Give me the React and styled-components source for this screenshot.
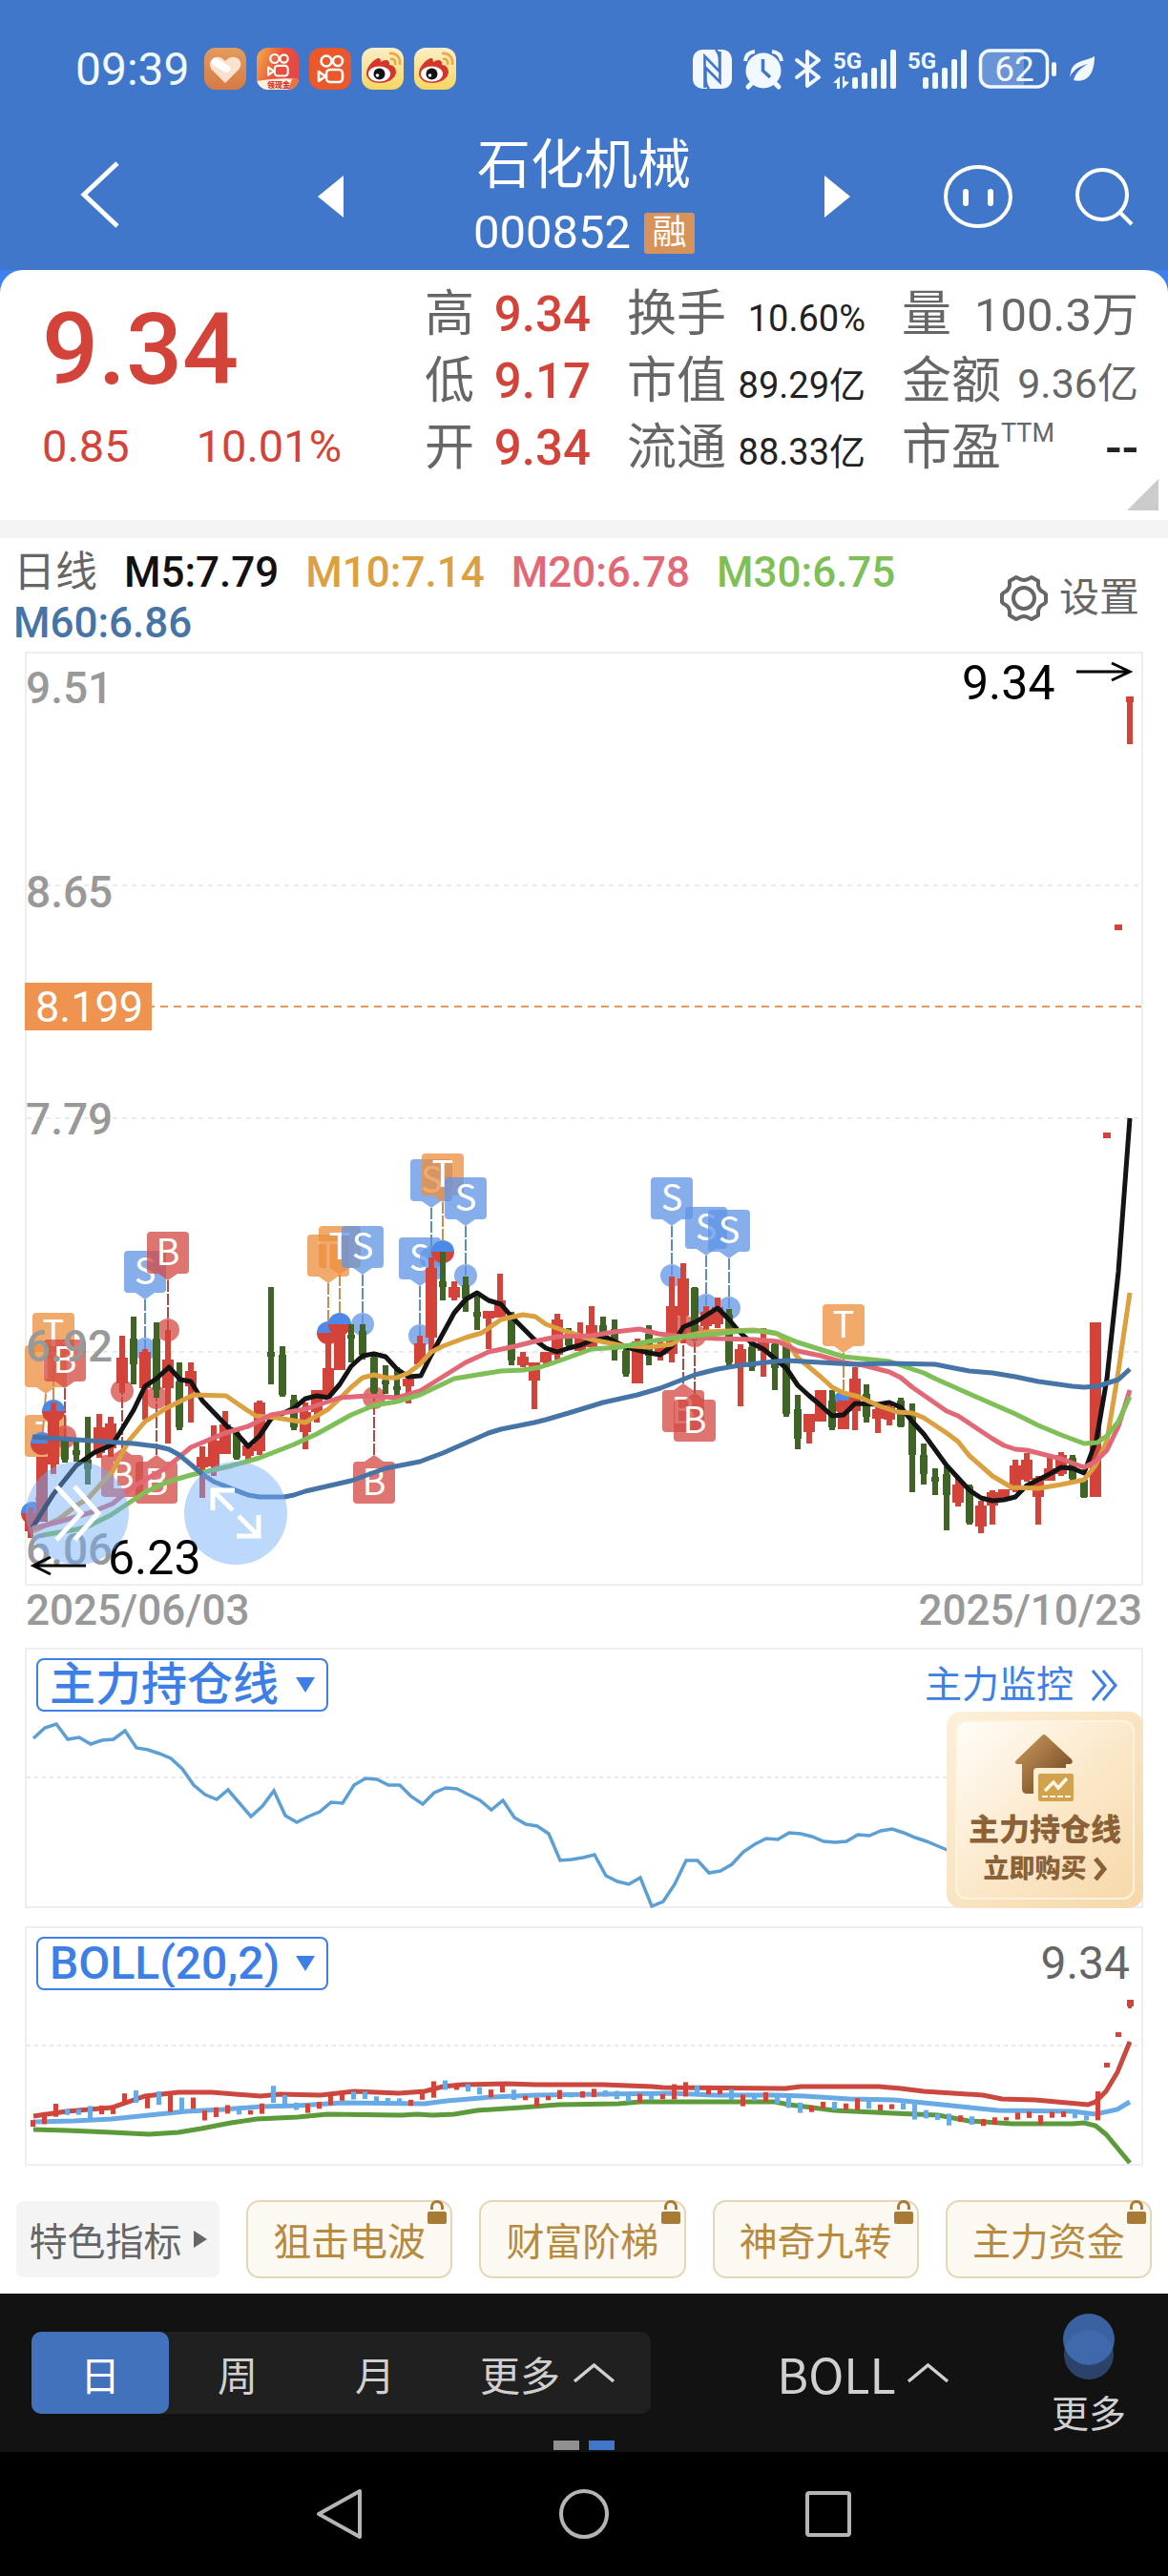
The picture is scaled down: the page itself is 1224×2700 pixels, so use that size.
import styled, { createGlobalStyle } from 'styled-components';

const FONT = 'Roboto, "Noto Sans CJK SC", sans-serif';
const BLUE = '#4077cb';
const LINK = '#3d7fe6';
const RED = '#d4433a';
const GREEN = '#3f6425';

const GlobalStyle = createGlobalStyle`
  * {
    box-sizing: border-box;
  }
  body {
    margin: 0;
    background: #000;
    font-family: ${FONT};
  }
  button,
  select {
    font-family: inherit;
    border: 0;
    padding: 0;
    background: none;
    color: inherit;
    cursor: pointer;
  }
  svg {
    display: block;
    flex: none;
    overflow: visible;
  }
`;

const Page = styled.main`
  background: #fff;
  color: #666;
`;

/* ---------- header ---------- */

const Header = styled.header`
  background: ${BLUE};
  color: #fff;
`;

const StatusBar = styled.div`
  display: flex;
  align-items: center;
  justify-content: space-between;
  height: 140px;
  padding: 4px 76px 0 79px;
  color: #f2f8ff;
`;

const StatusGroup = styled.div`
  display: flex;
  align-items: center;
  gap: ${({ $gap }) => $gap}px;
`;

const Clock = styled.time`
  font-size: 48px;
  margin-right: 4px;
`;

const TitleBar = styled.div`
  display: grid;
  grid-template-columns: 1fr auto 1fr;
  align-items: center;
  height: 143px;
  padding: 0 37px 17px;
`;

const TitleSide = styled.div`
  padding-left: 47px;
`;

const TitleActions = styled.div`
  display: flex;
  align-items: center;
  justify-content: flex-end;
  gap: 66px;
`;

const TitleCenter = styled.div`
  display: flex;
  align-items: center;
  justify-content: space-between;
  width: 558px;
`;

const StockTitle = styled.div`
  display: flex;
  flex-direction: column;
  align-items: center;
  gap: 10px;
`;

const StockName = styled.h1`
  margin: 0;
  font-size: 56px;
  font-weight: 400;
  line-height: 66px;
`;

const StockCode = styled.div`
  display: flex;
  align-items: center;
  gap: 14px;
  font-size: 49px;
  line-height: 56px;
`;

const MarginTag = styled.span`
  width: 53px;
  height: 43px;
  border-radius: 3px;
  background: #d8935b;
  font-size: 36px;
  line-height: 42px;
  text-align: center;
`;

/* ---------- quote ---------- */

const QuoteBack = styled.div`
  background: #3d82f0;
`;

const Quote = styled.section`
  position: relative;
  display: flex;
  padding: 12px 31px 40px 44px;
  border-radius: 24px 24px 0 0;
  background: #fff;
`;

const PriceBox = styled.div`
  flex: 1;
  color: ${RED};
`;

const Price = styled.div`
  padding-top: 9px;
  font-size: 104px;
  font-weight: 500;
  line-height: 126px;
`;

const Change = styled.div`
  display: flex;
  gap: 70px;
  padding-top: 8px;
  font-size: 47px;
  line-height: 60px;
`;

const Facts = styled.dl`
  display: grid;
  grid-template-columns: 174px 250px 248px;
  grid-auto-rows: 70px;
  column-gap: 38px;
  margin: 0;
`;

const Fact = styled.div`
  display: flex;
  align-items: baseline;
  justify-content: space-between;
  white-space: nowrap;
  line-height: 70px;
`;

const FactName = styled.dt`
  font-size: 52px;

  & sup {
    font-size: 27px;
    line-height: 1;
    vertical-align: 24px;
  }
`;

const FactValue = styled.dd`
  margin: 0;
  font-size: ${({ $size }) => $size}px;
  font-weight: ${({ $bold }) => ($bold ? 500 : 400)};
  color: ${({ $color }) => $color};
`;

const CornerButton = styled.button`
  position: absolute;
  right: 10px;
  bottom: 10px;
  width: 33px;
  height: 33px;
  background: #ccc;
  clip-path: polygon(100% 0, 100% 100%, 0 100%);
`;

/* ---------- charts ---------- */

const LegendBar = styled.div`
  display: flex;
  align-items: center;
  justify-content: space-between;
  border-top: 19px solid #f4f4f4;
  padding: 10px 30px 3px 14px;
`;

const Legend = styled.div`
  display: flex;
  flex-wrap: wrap;
  column-gap: 28px;
  max-width: 960px;
  font-size: 44px;
  line-height: 53px;
`;

const LegendItem = styled.span`
  color: ${({ $color }) => $color};
  font-weight: ${({ $bold }) => ($bold ? 500 : 400)};
`;

const SettingsButton = styled.button`
  display: flex;
  align-items: center;
  gap: 12px;
  font-size: 42px;
  line-height: 52px;
  color: #666;
`;

const Panel = styled.section`
  position: relative;
  margin: 0 26px;
  border: 2px solid #eee;

  & > svg {
    width: 100%;
    height: auto;
  }
`;

const FloatButton = styled.button`
  position: absolute;
  left: ${({ $left }) => $left}px;
  bottom: 20px;
  display: flex;
  align-items: center;
  justify-content: center;
  width: 108px;
  height: 108px;
  border-radius: 50%;
  background: rgba(112, 172, 246, 0.47);
`;

const Dates = styled.div`
  display: flex;
  justify-content: space-between;
  height: 65px;
  padding: 0 27px;
  font-size: 44px;
  font-weight: 500;
  line-height: 53px;
  color: #999;
`;

const PanelHead = styled.div`
  display: flex;
  align-items: center;
  justify-content: space-between;
  height: 65px;
  padding: 9px 12px 0 10px;
`;

const SelectWrap = styled.label`
  position: relative;
  display: flex;
  align-items: center;
  color: ${LINK};

  & svg {
    position: absolute;
    right: 14px;
    pointer-events: none;
  }
`;

const Select = styled.select`
  appearance: none;
  width: 306px;
  height: 56px;
  padding: 0 40px 0 12px;
  border: 2px solid ${LINK};
  border-radius: 8px;
  font-size: 48px;
  line-height: 50px;
  font-weight: 500;
`;

const MonitorLink = styled.a`
  display: flex;
  align-items: center;
  gap: 18px;
  padding-right: 12px;
  color: ${LINK};
  font-size: 39px;
  line-height: 50px;
  text-decoration: none;
`;

const LastValue = styled.span`
  font-size: 48px;
  line-height: 52px;
`;

const BuyCard = styled.a`
  position: absolute;
  right: -2px;
  bottom: -2px;
  width: 206px;
  height: 206px;
  padding: 9px;
  border-radius: 15px;
  background: linear-gradient(135deg, #fcf0da, #f6d8a9);
  color: #8b6238;
  text-decoration: none;
`;

const BuyInner = styled.span`
  display: flex;
  flex-direction: column;
  align-items: center;
  height: 100%;
  padding-top: 13px;
  border: 2px solid #fff3dd;
  border-radius: 12px;
  background: linear-gradient(135deg, #fffdf8, #fbe7c7 55%, #f7d9ab);
`;

const BuyTitle = styled.strong`
  margin-top: 8px;
  font-size: 32px;
  font-weight: 900;
  line-height: 44px;
  white-space: nowrap;
`;

const BuyAction = styled.strong`
  display: flex;
  align-items: center;
  gap: 7px;
  font-size: 27px;
  font-weight: 900;
  line-height: 38px;
`;

const Gap = styled.div`
  height: 19px;
`;

/* ---------- indicator buttons ---------- */

const Indicators = styled.div`
  display: grid;
  grid-template-columns: 213px repeat(4, 1fr);
  gap: 28px;
  padding: 36px 17px 16px;
`;

const FeatureButton = styled.button`
  display: flex;
  align-items: center;
  justify-content: center;
  gap: 12px;
  height: 80px;
  align-self: center;
  border-radius: 8px;
  background: #f4f4f4;
  color: #666;
  font-size: 40px;
`;

const LockedButton = styled.button`
  position: relative;
  height: 82px;
  border: 2px solid #e5d6ba;
  border-radius: 14px;
  background: #fcf8f2;
  color: #b68b40;
  font-size: 40px;

  & svg {
    position: absolute;
    top: -2px;
    right: 4px;
  }
`;

/* ---------- bottom ---------- */

const Toolbar = styled.div`
  position: relative;
  display: flex;
  align-items: center;
  justify-content: space-between;
  height: 166px;
  padding: 0 44px 0 33px;
  background: #121212;
  color: #d0d0d0;
`;

const Periods = styled.div`
  display: flex;
  width: 649px;
  height: 86px;
  border-radius: 10px;
  background: #202020;
`;

const PeriodButton = styled.button`
  flex: ${({ $wide }) => ($wide ? '1' : '0 0 144px')};
  display: flex;
  align-items: center;
  justify-content: center;
  gap: 14px;
  border-radius: 10px;
  background: ${({ $active }) => ($active ? '#4272bb' : 'transparent')};
  color: ${({ $active }) => ($active ? '#fff' : 'inherit')};
  font-size: 42px;
`;

const IndexButton = styled.button`
  display: flex;
  align-items: center;
  gap: 12px;
  margin-left: 24px;
  font-family: 'Noto Sans CJK SC', sans-serif;
  font-size: 50px;
  line-height: 60px;
`;

const MoreButton = styled.button`
  display: flex;
  flex-direction: column;
  align-items: center;
  gap: 6px;
  padding-top: 12px;
  font-size: 39px;
  line-height: 60px;
`;

const Pager = styled.div`
  position: absolute;
  left: 0;
  right: 0;
  bottom: 2px;
  display: flex;
  justify-content: center;
  gap: 10px;
`;

const PagerDot = styled.span`
  width: 27px;
  height: 10px;
  background: ${({ $active }) => ($active ? BLUE : '#909090')};
`;

const NavBar = styled.nav`
  display: flex;
  justify-content: center;
  gap: 200px;
  height: 130px;
  background: #000;
`;

/* ---------- data ---------- */

const FACTS = [
  { name: '高', value: '9.34', size: 51, bold: true, color: RED },
  { name: '换手', value: '10.60%', size: 38, color: '#222' },
  { name: '量', value: '100.3万', size: 49, color: '#666' },
  { name: '低', value: '9.17', size: 51, bold: true, color: RED },
  { name: '市值', value: '89.29亿', size: 38, color: '#222' },
  { name: '金额', value: '9.36亿', size: 43, color: '#666' },
  { name: '开', value: '9.34', size: 51, bold: true, color: RED },
  { name: '流通', value: '88.33亿', size: 38, color: '#222' },
  { name: '市盈', sup: 'TTM', value: '--', size: 51, bold: true, color: '#222' },
];

const LEGEND = [
  { text: 'M5:7.79', color: '#111' },
  { text: 'M10:7.14', color: '#dca03f' },
  { text: 'M20:6.78', color: '#e26876' },
  { text: 'M30:6.75', color: '#7fbf57' },
  { text: 'M60:6.86', color: '#4674a6' },
];

// one candle per trading day: [up, high, low, body top, body bottom], y measured from BASE
const BASE = 1180;
const CANDLES = [
  [1, 400, 432, 406, 425], [1, 347, 415, 347, 415], [1, 290, 365, 305, 355], [0, 327, 353, 330, 350],
  [0, 327, 352, 340, 345], [0, 305, 376, 350, 360], [1, 302, 348, 316, 343], [1, 305, 347, 312, 338],
  [1, 220, 280, 243, 270], [0, 200, 271, 223, 250], [1, 234, 308, 237, 275], [0, 206, 285, 223, 277],
  [1, 214, 333, 245, 275], [0, 248, 319, 268, 316], [1, 248, 311, 257, 273], [1, 336, 390, 347, 358],
  [1, 314, 367, 330, 357], [1, 299, 344, 313, 344], [0, 320, 350, 322, 348], [1, 334, 350, 335, 346],
  [1, 288, 345, 290, 341], [0, 169, 271, 237, 242], [0, 231, 284, 240, 282], [0, 282, 319, 287, 316],
  [1, 290, 339, 300, 321], [1, 277, 311, 277, 300], [1, 225, 287, 254, 282], [1, 210, 256, 210, 256],
  [0, 208, 248, 219, 223], [0, 208, 245, 215, 240], [0, 240, 281, 243, 279], [0, 251, 281, 267, 271],
  [0, 253, 290, 273, 277], [1, 263, 291, 265, 273], [1, 220, 250, 228, 250], [1, 138, 236, 149, 222],
  [0, 132, 183, 163, 169], [1, 163, 183, 169, 180], [0, 158, 195, 167, 181], [0, 178, 214, 195, 200],
  [1, 194, 234, 194, 202], [1, 155, 201, 183, 201], [0, 195, 251, 198, 246], [1, 237, 253, 242, 251],
  [1, 248, 297, 248, 267], [1, 237, 253, 237, 248], [1, 197, 245, 203, 240], [0, 212, 234, 216, 230],
  [1, 206, 236, 222, 236], [1, 189, 232, 209, 232], [0, 200, 228, 209, 225], [0, 203, 246, 213, 235],
  [0, 230, 263, 236, 260], [1, 223, 270, 226, 270], [0, 209, 251, 218, 241], [1, 225, 246, 232, 240],
  [1, 158, 248, 189, 239], [1, 144, 228, 160, 199], [0, 169, 225, 170, 222], [1, 189, 214, 195, 210],
  [1, 180, 212, 190, 208], [0, 192, 251, 198, 248], [1, 229, 294, 234, 250], [0, 225, 257, 232, 253],
  [1, 212, 263, 225, 236], [0, 226, 277, 229, 254], [0, 225, 305, 230, 302], [0, 282, 339, 297, 328],
  [1, 302, 333, 302, 321], [1, 277, 310, 277, 310], [0, 277, 319, 288, 316], [1, 288, 318, 288, 318],
  [1, 253, 319, 265, 299], [0, 271, 311, 281, 305], [1, 295, 322, 297, 307], [1, 293, 314, 295, 308],
  [0, 285, 316, 288, 315], [0, 291, 384, 300, 345], [0, 333, 376, 345, 365], [0, 359, 387, 368, 373],
  [0, 357, 424, 365, 387], [1, 369, 399, 376, 395], [0, 376, 418, 378, 416], [1, 393, 427, 398, 420],
  [1, 382, 418, 384, 398], [1, 381, 390, 381, 390], [1, 350, 384, 356, 382], [1, 343, 373, 350, 371],
  [1, 367, 418, 369, 389], [1, 345, 372, 359, 372], [1, 342, 367, 345, 365], [0, 345, 375, 348, 370],
  [0, 369, 390, 371, 389], [1, 206, 389, 206, 389],
];

const LINES = [
  {
    color: '#141414',
    points:
      '34,421 56,386 80,356 98,343 118,334 140,298 152,273 164,265 177,253 189,266 200,268 212,288 240,317 246,320 260,336 272,325 284,307 308,296 320,286 332,283 344,285 356,271 368,252 380,241 392,239 404,242 416,255 428,263 441,262 452,240 476,196 488,182 500,175 512,183 525,187 536,200 560,224 572,233 584,237 596,233 608,230 620,225 636,222 656,232 680,238 692,240 704,231 716,211 730,205 752,191 764,203 774,215 788,228 800,234 824,254 836,272 848,283 860,293 872,304 884,303 896,291 920,292 932,290 944,295 956,310 968,323 992,356 1016,382 1028,390 1040,393 1052,392 1064,389 1076,377 1100,365 1112,358 1124,359 1136,364 1149,329 1160,265 1172,153 1184,-8',
  },
  {
    color: '#dca03f',
    points:
      '35,425 62,412 80,398 92,391 118,362 135,330 152,310 176,295 203,282 237,283 250,292 268,304 290,306 320,311 344,297 356,286 368,274 380,264 392,261 404,264 416,264 428,259 440,250 452,237 464,231 488,222 505,217 525,203 548,198 561,200 572,208 592,215 620,224 650,230 680,232 704,229 716,221 740,216 764,215 790,214 815,218 826,228 836,243 860,263 872,274 884,280 900,284 920,293 940,300 956,301 968,306 992,322 1004,331 1016,346 1040,367 1060,379 1088,380 1112,376 1136,371 1148,356 1160,330 1172,257 1184,175',
  },
  {
    color: '#e26876',
    points:
      '34,422 62,415 96,405 118,396 140,378 175,358 200,337 236,322 260,315 284,303 320,297 356,285 385,283 416,285 440,278 464,263 488,248 512,237 540,231 560,226 584,221 620,220 644,216 670,213 690,218 716,221 752,223 790,224 815,226 836,236 860,241 884,248 905,251 932,258 944,264 956,274 992,299 1004,304 1028,320 1040,328 1052,335 1064,339 1076,340 1088,343 1112,349 1136,358 1148,352 1160,340 1172,315 1184,277',
  },
  {
    color: '#7fbf57',
    points:
      '45,429 80,423 92,420 116,408 152,384 176,373 200,366 240,357 272,348 308,334 332,323 368,303 392,293 416,289 440,282 476,265 500,261 525,257 548,256 566,253 584,247 620,234 650,232 680,226 716,221 752,218 776,215 800,215 812,217 836,227 884,242 932,247 956,255 968,259 980,265 1016,281 1064,302 1088,314 1112,324 1136,333 1150,332 1160,325 1172,310 1184,284',
  },
  {
    color: '#4674a6',
    points:
      '34,326 80,329 140,333 164,336 177,339 188,345 212,365 224,373 260,387 272,389 298,389 308,387 320,383 368,372 404,359 440,352 464,343 512,322 525,318 560,311 572,308 596,301 632,290 668,282 692,275 728,261 752,255 776,251 812,247 824,246 860,248 896,250 932,249 980,250 1000,254 1016,257 1040,259 1064,263 1088,268 1124,273 1136,274 1150,273 1172,266 1184,255',
  },
];

// trade flags: [letter, x of the day, box x, box top, dot y]
const FLAGS = [
  ['T', 34, 48, 303, 406],
  ['T', 44, 48, 230, 333],
  ['T', 56, 56, 196, 299],
  ['B', 68, 68, 224, 326],
  ['S', 152, 152, 131, 234],
  ['B', 176, 176, 111, 214],
  ['B', 164, 164, 352, 285],
  ['B', 128, 128, 345, 278],
  ['T', 344, 344, 114, 217],
  ['T', 356, 356, 105, 208],
  ['S', 380, 380, 105, 208],
  ['B', 392, 392, 352, 285],
  ['S', 440, 440, 117, 220],
  ['S', 452, 452, 35, 138],
  ['T', 464, 464, 29, 132],
  ['S', 488, 488, 54, 157],
  ['S', 704, 704, 54, 157],
  ['S', 740, 740, 85, 188],
  ['S', 764, 764, 88, 191],
  ['B', 716, 716, 277, 210],
  ['B', 728, 728, 287, 220],
  ['T', 884, 884, 187, 290],
];

const FLAG_COLORS = {
  T: { fill: '#ed8f3f', line: '#d28a4e' },
  B: { fill: '#d44a44', line: '#b04a45' },
  S: { fill: '#6195e6', line: '#5a8fc4' },
};

const HOLDING = [
  95, 84, 80, 96, 94, 101, 97, 96, 87, 105, 107, 111, 116, 127, 144, 154, 159, 149, 163, 177, 166, 150, 176, 183, 177,
  172, 162, 163, 144, 137, 138, 144, 144, 156, 164, 152, 147, 148, 154, 160, 170, 160, 178, 185, 187, 195, 223, 222,
  220, 217, 239, 245, 248, 241, 271, 266, 248, 223, 223, 236, 234, 227, 214, 206, 200, 201, 194, 195, 198, 203, 204,
  203, 196, 197, 192, 190, 194, 199, 203, 208, 213,
];

const BOLL = [
  {
    color: '#5c9a3a',
    points:
      '35,2232 70,2233 117,2235 156,2237 187,2235 211,2231 242,2225 269,2221 312,2219 343,2216 421,2217 437,2216 453,2217 476,2216 500,2212 546,2209 585,2206 648,2205 671,2203 812,2203 827,2206 851,2209 874,2212 937,2215 983,2217 1015,2223 1061,2226 1124,2226 1136,2225 1148,2228 1159,2237 1184,2267',
  },
  {
    color: '#67aae6',
    points:
      '35,2224 78,2223 117,2221 156,2217 195,2213 234,2211 273,2208 312,2207 359,2204 445,2205 468,2202 515,2198 562,2196 702,2194 749,2196 812,2196 843,2197 890,2200 937,2201 968,2204 1007,2208 1046,2212 1124,2213 1148,2216 1171,2211 1184,2203',
  },
  {
    color: '#cb4840',
    points:
      '35,2218 70,2213 117,2209 152,2197 187,2193 222,2193 273,2197 293,2195 336,2196 371,2192 418,2194 445,2192 464,2187 484,2185 531,2184 562,2185 632,2185 683,2187 695,2188 823,2189 839,2187 921,2187 944,2189 968,2192 1030,2196 1050,2200 1085,2201 1140,2206 1148,2203 1159,2192 1171,2172 1184,2140',
  },
];

const LOCKED = ['狙击电波', '财富阶梯', '神奇九转', '主力资金'];

const dayX = (index) => 32 + index * 12;
const bollY = (y) => 2192 + (y - 206) * 0.155;

/* ---------- icons ---------- */

const HeartApp = () => (
  <svg width="44" height="44" viewBox="0 0 44 44" aria-hidden="true">
    <defs>
      <linearGradient id="heartBg" x1="0" y1="0" x2="0" y2="1">
        <stop offset="0" stopColor="#e29c5e" />
        <stop offset="1" stopColor="#d67a46" />
      </linearGradient>
    </defs>
    <rect width="44" height="44" rx="12" fill="url(#heartBg)" />
    <path d="M22 37 8 23C1 13 14 4 22 14 30 4 44 13 36 23z" fill="#fbe2cf" />
    <path d="M12 15 23 22" stroke="#fff" strokeWidth="8" strokeLinecap="round" />
  </svg>
);

const KuaishouApp = ({ gold }) => (
  <svg width="44" height="44" viewBox="0 0 44 44" aria-hidden="true">
    <defs>
      <linearGradient id="kuai" x1="0" y1="0" x2="1" y2="0.4">
        <stop offset="0" stopColor="#f3b04a" />
        <stop offset="0.6" stopColor="#ea5038" />
        <stop offset="1" stopColor="#e44848" />
      </linearGradient>
      <clipPath id="kuaiClip">
        <rect width="44" height="44" rx="12" />
      </clipPath>
    </defs>
    <rect width="44" height="44" rx="12" fill={gold ? 'url(#kuai)' : '#e9592b'} />
    <g
      fill="none"
      stroke="#fff"
      strokeWidth="2.6"
      transform={gold ? 'translate(4 0) scale(.82)' : undefined}
      strokeLinejoin="round"
    >
      <circle cx="18" cy="14" r="5.5" />
      <circle cx="30" cy="14" r="5" />
      <rect x="18" y="23" width="17" height="13" rx="4" />
      <path d="M17 30 10 25V35z" />
    </g>
    {gold && (
      <>
        <g clipPath="url(#kuaiClip)">
          <path d="M0 35Q22 31 44 33V44H0z" fill="#fff1e2" />
          <path d="M37 33H44V44H33z" fill="#f0703a" />
        </g>
        <text x="11" y="42" fontSize="8" fontWeight="900" fill="#d8342c">
          领现金
        </text>
      </>
    )}
  </svg>
);

const WeiboApp = () => (
  <svg width="44" height="44" viewBox="0 0 44 44" aria-hidden="true">
    <defs>
      <linearGradient id="weiboBg" x1="0" y1="0" x2="0" y2="1">
        <stop offset="0" stopColor="#fbeec8" />
        <stop offset="1" stopColor="#f6d65e" />
      </linearGradient>
    </defs>
    <rect width="44" height="44" rx="12" fill="url(#weiboBg)" />
    <path
      d="M5 27C5 20 12 13 17 11 20 11 20 13 20 15 24 12 30 12 29 18 34 18 36 22 36 26 35 33 27 37 19 37 11 37 5 33 5 27z"
      fill="#d7352c"
    />
    <ellipse cx="18.5" cy="27.5" rx="11.5" ry="8" fill="#fff" />
    <circle cx="18.5" cy="27.5" r="6" fill="#111" />
    <circle cx="16.5" cy="29" r="1.8" fill="#fff" />
    <path d="M29 6C37 5 41 11 40 18M30 12C34 11 36 14 35 18" fill="none" stroke="#eba848" strokeWidth="2.6" />
  </svg>
);

const NfcIcon = () => (
  <svg width="41" height="42" viewBox="0 0 41 42" aria-hidden="true">
    <rect x="0" y="1" width="41" height="41" rx="10" fill="currentColor" />
    <path
      d="M12.5 41V8L28 24V12Q28 5 24 1M28.500 3V35L13.500 20V32Q13.500 38 17 42"
      fill="none"
      stroke={BLUE}
      strokeWidth="2.6"
    />
  </svg>
);

const AlarmIcon = () => (
  <svg width="40" height="42" viewBox="0 0 40 42" aria-hidden="true">
    <circle cx="20" cy="23" r="18.5" fill="currentColor" />
    <path d="M8 36 4 40M32 36 36 40" stroke="currentColor" strokeWidth="5" strokeLinecap="round" />
    <path d="M1 13Q2 4 11 3M39 13Q38 4 29 3" fill="none" stroke="currentColor" strokeWidth="4" />
    <path d="M19.5 11V23L27 30" fill="none" stroke={BLUE} strokeWidth="3.5" />
  </svg>
);

const BluetoothIcon = () => (
  <svg width="27" height="42" viewBox="0 0 27 42" aria-hidden="true">
    <path
      d="M2 12 25 30 13 39V3L25 12 2 30"
      fill="none"
      stroke="currentColor"
      strokeWidth="4"
      strokeLinejoin="round"
      strokeLinecap="round"
    />
  </svg>
);

const SignalIcon = ({ data }) => (
  <svg width={data ? 66 : 61} height="42" viewBox={data ? '0 0 66 42' : '5 0 61 42'} fill="currentColor">
    <text x={data ? 0 : 4} y="21" fontSize="24" fontWeight="700">
      5G
    </text>
    <rect x="20" y="30" width="6" height="12" rx="2" />
    <rect x="30" y="25" width="6" height="17" rx="2" />
    <rect x="40" y="20" width="6" height="22" rx="2" />
    <rect x="50" y="11" width="6" height="31" rx="2" />
    <rect x="60" y="1" width="6" height="41" rx="2" />
    {data && <path d="M0 36 7 29V42H4V36zM10 29H12V34L17 35 10 42z" />}
  </svg>
);

const BatteryIcon = () => (
  <svg width="82" height="42" viewBox="0 0 82 42" aria-label="62%">
    <path d="M11 2H47V40H11A9 9 0 0 1 2 31V11A9 9 0 0 1 11 2z" fill="#fff" opacity=".22" />
    <rect x="1.500" y="2" width="70" height="38" rx="10" fill="none" stroke="currentColor" strokeWidth="3.5" />
    <rect x="76" y="14" width="5" height="15" rx="2.5" fill="currentColor" />
    <text x="37" y="34" fontSize="37" fill="currentColor" textAnchor="middle">
      62
    </text>
  </svg>
);

const LeafIcon = () => (
  <svg width="27" height="28" viewBox="0 0 27 28" aria-hidden="true">
    <path d="M26 1C18 6 3 5 1 18L0 23C5 13 12 11 19 9 12 13 6 18 4 26 22 30 26 14 26 1z" fill="currentColor" />
  </svg>
);

const GearIcon = () => (
  <svg width="50" height="50" viewBox="0 0 50 50" fill="none" stroke="#666" strokeWidth="4">
    <path
      d="M17 3 21 5Q25 7 29 5L33 3 40 7V12Q41 17 46 19L48 21V29L46 31Q41 33 40 38V43L33 47 29 45Q25 43 21 45L17 47 10 43V38Q9 33 4 31L2 29V21L4 19Q9 17 10 12V7z"
      strokeLinejoin="round"
    />
    <circle cx="25" cy="25" r="11" />
  </svg>
);

const HouseIcon = () => (
  <svg width="64" height="70" viewBox="0 0 64 70" aria-hidden="true">
    <defs>
      <linearGradient id="roof" x1="0" y1="0" x2="1" y2="1">
        <stop offset="0.2" stopColor="#b98a52" />
        <stop offset="0.8" stopColor="#7d5128" />
      </linearGradient>
    </defs>
    <path
      d="M29 1Q31-1 33 1L60 26Q62 29 59 31H54V35H24Q20 35 20 39V62H13Q8 62 8 57V31H3Q-1 30 2 27z"
      fill="url(#roof)"
    />
    <rect x="25" y="41" width="37" height="29" rx="2" fill="#d3a24d" />
    <path d="M32 59 41 50 46 56 55 46" fill="none" stroke="#fff8e8" strokeWidth="3.5" />
    <path d="M29 65H59" stroke="#fff8e8" strokeWidth="2" strokeDasharray="6 2" />
  </svg>
);

const Caret = () => (
  <svg width="20" height="16" viewBox="0 0 20 16" fill="currentColor">
    <path d="M0 0H20L10 16z" />
  </svg>
);

const UpIcon = () => (
  <svg width="43" height="21" viewBox="0 0 43 21" fill="none" stroke="currentColor" strokeWidth="3.5">
    <path d="M1 19 21.5 2 42 19" />
  </svg>
);

const LockIcon = () => (
  <svg width="20" height="26" viewBox="0 0 20 26" aria-hidden="true">
    <path d="M4.5 10V7A5.500 5.500 0 0 1 15.500 7V10" fill="none" stroke="#a87a35" strokeWidth="3" />
    <rect y="12" width="20" height="13" rx="2" fill="#a87a35" />
  </svg>
);

/* ---------- chart parts ---------- */

const Candle = ({ x, candle: [up, high, low, top, bottom] }) => {
  const body = up ? 12 : 8;
  return (
    <g fill={up ? RED : GREEN}>
      <rect x={x - 3} y={high} width="6" height={low - high} />
      <rect x={x - body / 2} y={top} width={body} height={bottom - top} />
    </g>
  );
};

const FlagDot = ({ flag: [letter, x, , , y] }) =>
  letter === 'T' ? (
    <g>
      <path d={`M${x - 12} ${y}a12 12 0 0 1 24 0z`} fill="#4d8ae8" />
      <path d={`M${x - 12} ${y}a12 12 0 0 0 24 0z`} fill={RED} />
    </g>
  ) : (
    <circle cx={x} cy={y} r="12" fill={FLAG_COLORS[letter].fill} opacity=".75" />
  );

const Flag = ({ flag: [letter, x, boxX, top, dotY] }) => {
  const { fill, line } = FLAG_COLORS[letter];
  const below = top > dotY;
  const tip = below ? top - 7 : top + 51;
  const edge = below ? top : top + 44;
  return (
    <g>
      <path d={`M${boxX} ${tip}L${x} ${dotY}`} stroke={line} strokeWidth="2" strokeDasharray="12 2" />
      <text x={boxX} y={top + 35} fontSize="38" fill="#fff" textAnchor="middle" fontFamily="Noto Sans CJK SC">
        {letter}
      </text>
    </g>
  );
};

const FlagBox = ({ flag: [letter, , boxX, top, dotY] }) => {
  const below = top > dotY;
  const tip = below ? top - 7 : top + 51;
  const edge = below ? top : top + 44;
  return (
    <g opacity=".76" fill={FLAG_COLORS[letter].fill}>
      <rect x={boxX - 22} y={top} width="44" height="44" rx="4" />
      <path d={`M${boxX - 10} ${edge}H${boxX + 10}L${boxX} ${tip}z`} />
    </g>
  );
};

const PriceChart = () => (
  <svg viewBox="28 685 1168 975" role="img" aria-label="日线">
    <g stroke="#eaeaea" strokeWidth="2" strokeDasharray="5 5">
      <path d="M28 928H1196M28 1172H1196M28 1417H1196" />
    </g>
    <path d="M28 1055H1196" stroke="#e5995f" strokeWidth="2" strokeDasharray="8 6" />
    <g transform={`translate(0 ${BASE})`}>
      {FLAGS.map((flag, index) => (
        <g key={index}>
          <FlagBox flag={flag} />
          <Flag flag={flag} />
        </g>
      ))}
      {FLAGS.map((flag, index) => (
        <FlagDot key={index} flag={flag} />
      ))}
      {CANDLES.map((candle, index) => (
        <Candle key={index} x={dayX(index)} candle={candle} />
      ))}
      <g fill={RED}>
        <rect x="1156" y="7" width="8" height="6" />
        <rect x="1168" y="-211" width="8" height="6" />
        <rect x="1181" y="-450" width="6" height="50" />
        <rect x="1180" y="-450" width="8" height="6" />
      </g>
      {LINES.map(({ color, points }) => (
        <polyline key={color} points={points} fill="none" stroke={color} strokeWidth="5" strokeLinejoin="round" />
      ))}
    </g>
    <g fill="#999" fontSize="46" fontWeight="500">
      <text x="27" y="737">
        9.51
      </text>
      <text x="27" y="951">
        8.65
      </text>
      <text x="27" y="1189">
        7.79
      </text>
      <text x="27" y="1427">
        6.92
      </text>
      <text x="27" y="1640">
        6.06
      </text>
    </g>
    <rect x="26" y="1030" width="133" height="50" fill="#ee9350" />
    <text x="37" y="1071" fontSize="45" fill="#fff">
      8.199
    </text>
    <g fill="#000" fontSize="50">
      <text x="1008" y="733">
        9.34
      </text>
      <text x="113" y="1650">
        6.23
      </text>
    </g>
    <g fill="none" stroke="#000" strokeWidth="3">
      <path d="M1128 704H1184M1165 695 1184 704 1165 713" />
      <path d="M90 1641H35M53 1632 35 1641 53 1650" />
    </g>
  </svg>
);

const HoldingChart = () => (
  <svg viewBox="28 1794 1168 204" role="img" aria-label="主力持仓线">
    <path d="M28 1863H1196" stroke="#eaeaea" strokeWidth="2" strokeDasharray="4 4" />
    <polyline
      points={HOLDING.map((y, index) => `${dayX(index) + 3},${1727 + y}`).join(' ')}
      fill="none"
      stroke="#5c9fd4"
      strokeWidth="3.5"
    />
  </svg>
);

const BollChart = () => (
  <svg viewBox="28 2086 1168 182" role="img" aria-label="BOLL">
    <path d="M28 2144H1196" stroke="#eaeaea" strokeWidth="2" strokeDasharray="4 4" />
    {BOLL.map(({ color, points }) => (
      <polyline key={color} points={points} fill="none" stroke={color} strokeWidth="5" />
    ))}
    {CANDLES.map(([up, high, low], index) => (
      <rect
        key={index}
        x={dayX(index)}
        y={bollY(high)}
        width="5"
        height={bollY(low) - bollY(high) + 2}
        fill={up ? RED : '#67aae6'}
      />
    ))}
    <g fill={RED}>
      <rect x="1157" y="2162" width="6" height="5" />
      <rect x="1169" y="2130" width="6" height="5" />
      <rect x="1181" y="2096" width="7" height="7" />
      <rect x="1182" y="2102" width="4" height="3" />
    </g>
  </svg>
);

const App = () => (
  <>
    <GlobalStyle />
    <Page>
      <Header>
        <StatusBar>
          <StatusGroup $gap={11}>
            <Clock>09:39</Clock>
            <HeartApp />
            <KuaishouApp gold />
            <KuaishouApp />
            <WeiboApp />
            <WeiboApp />
          </StatusGroup>
          <StatusGroup $gap={13}>
            <NfcIcon />
            <AlarmIcon />
            <BluetoothIcon />
            <SignalIcon data />
            <SignalIcon />
            <BatteryIcon />
            <LeafIcon />
          </StatusGroup>
        </StatusBar>
        <TitleBar>
          <TitleSide>
            <button aria-label="返回">
              <svg width="42" height="70" viewBox="0 0 42 70" fill="none" stroke="#fff" strokeWidth="5">
                <path d="M39 2 4 35 39 68" />
              </svg>
            </button>
          </TitleSide>
          <TitleCenter>
            <button aria-label="上一只">
              <svg width="27" height="44" viewBox="0 0 27 44" fill="#fff">
                <path d="M27 0V44L0 22z" />
              </svg>
            </button>
            <StockTitle>
              <StockName>石化机械</StockName>
              <StockCode>
                000852
                <MarginTag>融</MarginTag>
              </StockCode>
            </StockTitle>
            <button aria-label="下一只">
              <svg width="27" height="44" viewBox="0 0 27 44" fill="#fff">
                <path d="M0 0V44L27 22z" />
              </svg>
            </button>
          </TitleCenter>
          <TitleActions>
            <button aria-label="助手">
              <svg width="72" height="66" viewBox="0 0 72 66" fill="none" stroke="#fff" strokeWidth="4">
                <ellipse cx="36" cy="33" rx="34" ry="31" />
                <path d="M23 28V40M49 28V40" strokeWidth="6" strokeLinecap="round" />
              </svg>
            </button>
            <button aria-label="搜索">
              <svg width="60" height="62" viewBox="0 0 60 62" fill="none" stroke="#fff" strokeWidth="4">
                <circle cx="28" cy="29" r="26" />
                <path d="M46 47 59 60" />
              </svg>
            </button>
          </TitleActions>
        </TitleBar>
      </Header>

      <QuoteBack>
        <Quote>
          <PriceBox>
            <Price>9.34</Price>
            <Change>
              <span>0.85</span>
              <span>10.01%</span>
            </Change>
          </PriceBox>
          <Facts>
            {FACTS.map(({ name, sup, value, size, bold, color }) => (
              <Fact key={name}>
                <FactName>
                  {name}
                  {sup && <sup>{sup}</sup>}
                </FactName>
                <FactValue $size={size} $bold={bold} $color={color}>
                  {value}
                </FactValue>
              </Fact>
            ))}
          </Facts>
          <CornerButton aria-label="展开" />
        </Quote>
      </QuoteBack>

      <LegendBar>
        <Legend>
          <LegendItem>日线</LegendItem>
          {LEGEND.map(({ text, color }) => (
            <LegendItem key={text} $color={color} $bold>
              {text}
            </LegendItem>
          ))}
        </Legend>
        <SettingsButton>
          <GearIcon />
          设置
        </SettingsButton>
      </LegendBar>

      <Panel>
        <PriceChart />
        <FloatButton $left={-1} aria-label="快进">
          <svg width="50" height="60" viewBox="0 0 50 60" fill="none" stroke="#fff" strokeWidth="5">
            <path d="M3 2 29 30 3 58M22 2 47 30 22 58" />
          </svg>
        </FloatButton>
        <FloatButton $left={165} aria-label="全屏">
          <svg width="54" height="54" viewBox="0 0 54 54" fill="none" stroke="#fff" strokeWidth="5">
            <path d="M26 3H3V24M3 3 24 24M28 51H51V29M51 51 30 30" />
          </svg>
        </FloatButton>
      </Panel>
      <Dates>
        <time>2025/06/03</time>
        <time>2025/10/23</time>
      </Dates>

      <Panel>
        <PanelHead>
          <SelectWrap>
            <Select aria-label="副图指标一">
              <option>主力持仓线</option>
            </Select>
            <Caret />
          </SelectWrap>
          <MonitorLink href="#monitor">
            主力监控
            <svg width="29" height="33" viewBox="0 0 29 33" fill="none" stroke="currentColor" strokeWidth="3">
              <path d="M2 1 15 16.500 2 32M13 1 26 16.500 13 32" />
            </svg>
          </MonitorLink>
        </PanelHead>
        <HoldingChart />
        <BuyCard href="#buy">
          <BuyInner>
            <HouseIcon />
            <BuyTitle>主力持仓线</BuyTitle>
            <BuyAction>
              立即购买
              <svg width="14" height="26" viewBox="0 0 14 26" fill="none" stroke="currentColor" strokeWidth="5">
                <path d="M2 2 11 13 2 24" />
              </svg>
            </BuyAction>
          </BuyInner>
        </BuyCard>
      </Panel>
      <Gap />
      <Panel>
        <PanelHead>
          <SelectWrap>
            <Select aria-label="副图指标二">
              <option>BOLL(20,2)</option>
            </Select>
            <Caret />
          </SelectWrap>
          <LastValue>9.34</LastValue>
        </PanelHead>
        <BollChart />
      </Panel>

      <Indicators>
        <FeatureButton>
          特色指标
          <svg width="14" height="18" viewBox="0 0 14 18" fill="currentColor">
            <path d="M0 0 14 9 0 18z" />
          </svg>
        </FeatureButton>
        {LOCKED.map((name) => (
          <LockedButton key={name}>
            {name}
            <LockIcon />
          </LockedButton>
        ))}
      </Indicators>

      <Toolbar>
        <Periods>
          <PeriodButton $active>日</PeriodButton>
          <PeriodButton>周</PeriodButton>
          <PeriodButton>月</PeriodButton>
          <PeriodButton $wide>
            更多
            <UpIcon />
          </PeriodButton>
        </Periods>
        <IndexButton>
          BOLL
          <UpIcon />
        </IndexButton>
        <MoreButton>
          <svg width="54" height="70" viewBox="0 0 54 70" aria-hidden="true">
            <circle cx="27" cy="43" r="26" fill="#2b4368" />
            <circle cx="27" cy="27" r="27" fill="#3b62a0" />
            <path d="M2 36A26 26 0 0 1 52 36 27 27 0 0 1 2 36z" fill="#3f69ab" />
          </svg>
          更多
        </MoreButton>
        <Pager>
          <PagerDot />
          <PagerDot $active />
        </Pager>
      </Toolbar>

      <NavBar>
        <button aria-label="返回上一页">
          <svg width="56" height="56" viewBox="0 0 56 56" fill="none" stroke="#b5b5b5" strokeWidth="4">
            <path d="M49 4V52L6 28z" strokeLinejoin="round" />
          </svg>
        </button>
        <button aria-label="主屏幕">
          <svg width="56" height="56" viewBox="0 0 56 56" fill="none" stroke="#b5b5b5" strokeWidth="4">
            <circle cx="28" cy="28" r="24" />
          </svg>
        </button>
        <button aria-label="最近任务">
          <svg width="56" height="56" viewBox="0 0 56 56" fill="none" stroke="#b5b5b5" strokeWidth="4">
            <rect x="6" y="6" width="44" height="44" rx="2" />
          </svg>
        </button>
      </NavBar>
    </Page>
  </>
);

export default App;
